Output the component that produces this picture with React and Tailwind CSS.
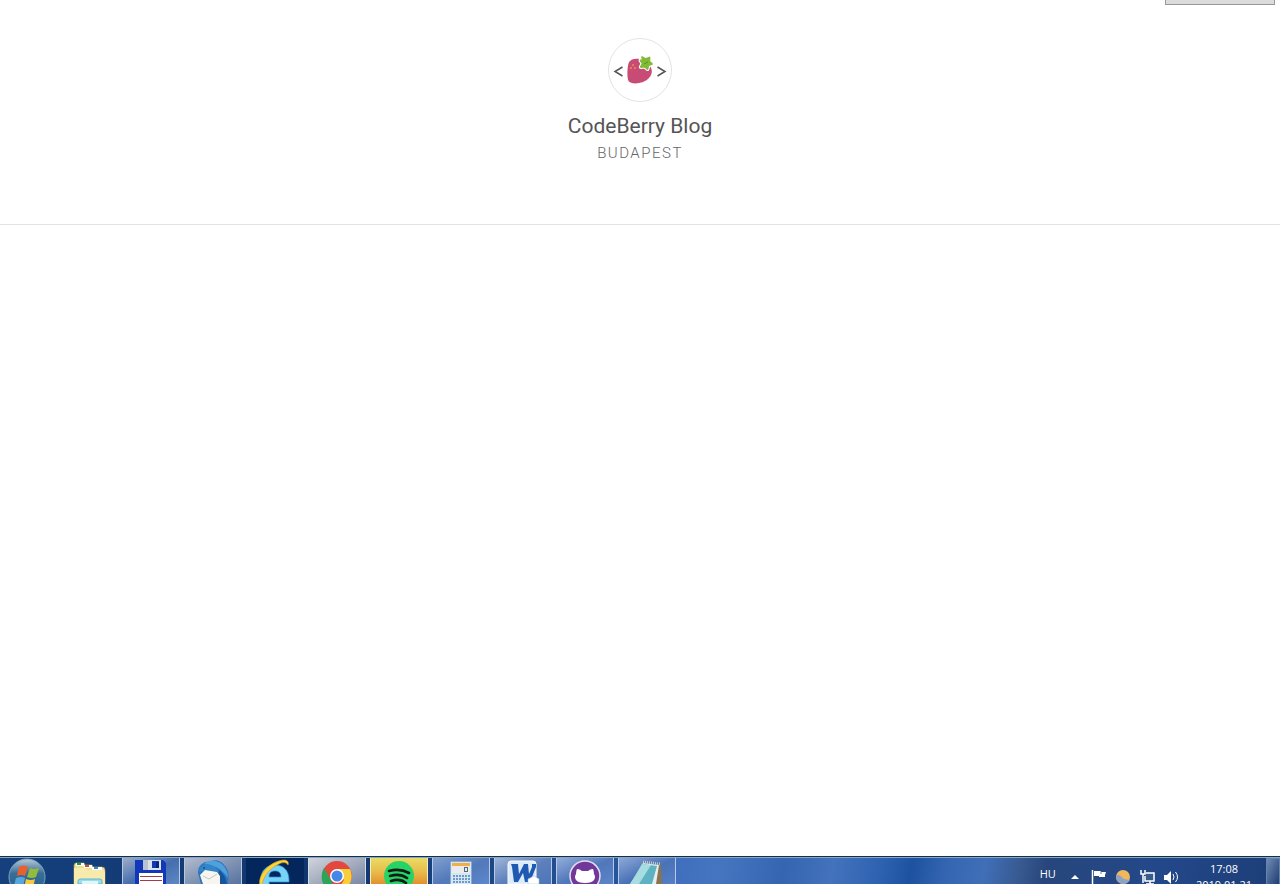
import React from "react";

const tasks = [
  { name: "Explorer", style: "border-transparent", icon: <Folder /> },
  { name: "Total Commander", style: "border-[#b9c8df] bg-linear-to-br from-[#9eacc9] via-[#466eae] to-[#5f8ac5]", icon: <Floppy /> },
  { name: "Thunderbird", style: "border-[#b9c8df] bg-linear-to-br from-[#b2bccd] via-[#8193b4] to-[#53709f]", icon: <Mail /> },
  { name: "Internet Explorer", style: "border-transparent bg-[#03265c]", icon: <Explorer /> },
  { name: "Chrome", style: "border-[#d5dce7] bg-linear-to-br from-[#d0d4dc] via-[#a4acbd] to-[#7484a5]", icon: <Chrome /> },
  { name: "Spotify", style: "border-[#f1ecc2] bg-linear-to-b from-[#e8dc65] via-[#e8bb49] to-[#e08a2c]", icon: <Spotify /> },
  { name: "Calculator", style: "border-[#b7c9e8] bg-linear-to-br from-[#819fcf] via-[#5279b9] to-[#5e89cf]", icon: <Calculator /> },
  { name: "Word", style: "border-[#b7c9e8] bg-linear-to-br from-[#a0b4d8] via-[#5d80bc] to-[#4a74b8]", icon: <Word /> },
  { name: "GitHub", style: "border-[#b7c9e8] bg-linear-to-br from-[#93acd9] via-[#5077ba] to-[#5c86cc]", icon: <GitHub /> },
  { name: "Notepad", style: "border-[#b7c9e8] bg-linear-to-br from-[#8da8d8] via-[#4a72b6] to-[#5680c8]", icon: <Notepad /> },
];

function Icon({ children }) {
  return (
    <svg viewBox="0 0 58 28" className="block h-7 w-[58px] shrink-0" aria-hidden="true">
      {children}
    </svg>
  );
}

function Folder() {
  return (
    <Icon>
      <path d="M14 28V10q0-3 2-3h8l1 2h7l1 2h9q3 0 3 3v14z" fill="#efdf8f" stroke="#a99a50" strokeWidth=".7" />
      <path d="M16 7h8v3h-8zM24 9h8v3h-8zM32 11h10v3H32z" fill="#fff" />
      <path d="M17 7h4v2h-4z" fill="#1d9b38" />
      <path d="M25 9h4v2h-4z" fill="#c5502e" />
      <path d="M34 11h4v2h-4z" fill="#3487c7" />
      <path d="M14 12h11l2 2h17l1 2v12H14z" fill="#f6ebad" />
      <path d="M18 28v-3q0-2 3-2h19q2 0 2 2v3z" fill="#9bdcec" stroke="#5eb4cf" />
      <path d="M22 25h16v3H22z" fill="#e0f7fa" />
    </Icon>
  );
}

function Floppy() {
  return (
    <Icon>
      <path d="M13 4h28l3 3v21H13z" fill="#1238ba" />
      <path d="M21 4h18v10H21z" fill="#dbe1e8" />
      <path d="M21 4h5v10h-5z" fill="#b9c2ce" />
      <path d="M30 5h7v7h-7z" fill="#1238ba" />
      <path d="M34 6h3v6h-3z" fill="#0a237e" />
      <path d="M17 17h24v11H17z" fill="#fff" />
      <path d="M18 20.500h22M18 24.500h22" stroke="#a33b4d" />
    </Icon>
  );
}

function Mail() {
  return (
    <Icon>
      <path d="M14 17C14 9 20 5 26 6c5-4 12-1 15 4 4 4 4 11 3 18H17z" fill="#2d76bd" />
      <path d="M20 8q8-7 18 0 6 6 6 14-7-10-15-12z" fill="#4fa1dd" />
      <path d="M35 14q6 4 8 14h-9z" fill="#195399" />
      <path d="M15 16q0-6 7-8 8 0 13 8l-12-2z" fill="#3186c9" />
      <path d="M16 19l5-5 12 2 3 4v8H19z" fill="#f7f5ef" />
      <path d="M19 20l6 3 8-5" fill="none" stroke="#b8b9b9" strokeWidth=".8" />
      <circle cx="20" cy="12" r=".8" fill="#0d2c5b" />
    </Icon>
  );
}

function Explorer() {
  return (
    <Icon>
      <path fillRule="evenodd" d="M15 23c0-9 6-14 14-14 9 0 14 6 14 15v2H23c0 4 4 6 8 5v5H22c-5-3-7-7-7-13m8-2h12c0-4-2-6-6-6s-6 2-6 6" fill="#79d3f6" stroke="#2794d7" strokeWidth=".7" />
      <path d="M14 30C11 19 24 5 38 4c4 0 5 3 4 5-2-3-5-3-9-1C24 12 17 20 16 30z" fill="#fbd33a" stroke="#d79a19" strokeWidth=".6" />
    </Icon>
  );
}

function Chrome() {
  return (
    <Icon>
      <circle cx="29" cy="20" r="15" fill="#e2483d" />
      <path d="M16 12l7 12 6 11C16 36 10 23 16 12" fill="#2ca45a" />
      <path d="M29 13h13c5 11-2 22-13 22l7-11z" fill="#f9ce3b" />
      <circle cx="29" cy="20" r="7" fill="#fff" />
      <circle cx="29" cy="20" r="5.5" fill="#4387e9" />
    </Icon>
  );
}

function Spotify() {
  return (
    <Icon>
      <circle cx="29" cy="20" r="15" fill="#25d366" />
      <path d="M19 15q11-3 20 2M20 20q10-3 17 2M21 25q9-3 15 2" fill="none" stroke="#111c17" strokeWidth="2.6" strokeLinecap="round" />
    </Icon>
  );
}

function Calculator() {
  return (
    <Icon>
      <rect x="18.5" y="5.5" width="21" height="27" rx="1" fill="#d5e6f4" stroke="#86aad1" />
      <path d="M20 7h18v3H20z" fill="#f1ad47" />
      <path d="M20 10h18v7H20z" fill="#e9ecea" />
      <rect x="32.5" y="11.5" width="3" height="4" fill="none" stroke="#51687d" />
      <path d="M21 20h17M21 23h17M21 26h17" stroke="#6f99c6" strokeWidth="2" strokeDasharray="2 1" />
    </Icon>
  );
}

function Word() {
  return (
    <Icon>
      <path d="M14 28V8q0-3 3-3h22q3 0 3 3v20z" fill="#dceafa" stroke="#f7fbff" />
      <path d="M17 8h7l1 10 5-10h4l1 10 3-7V8h4v3l-6 15h-5l-2-9-5 9h-4l-2-15z" fill="#1e5ab2" />
      <path d="M34 23l6-3 5 3v5H34z" fill="#fff" stroke="#a7bdda" strokeWidth=".5" />
    </Icon>
  );
}

function GitHub() {
  return (
    <Icon>
      <circle cx="29" cy="20" r="15" fill="#71389a" stroke="#e6def0" strokeWidth="1.5" />
      <path d="M21 13q3 0 5 2h6q2-2 5-2 1 2 1 5 2 3 0 6-2 3-9 3t-9-3q-2-3 0-6 0-3 1-5" fill="#fff" />
    </Icon>
  );
}

function Notepad() {
  return (
    <Icon>
      <path d="M40 8l3 2 1 18h-9z" fill="#8b7250" />
      <path d="M25 7l16 2-3 19H12z" fill="#e5f1ef" />
      <path d="M24 8l15 2-5 18H13z" fill="#5fb2c2" />
      <path d="M24 8l9 1-12 19h-8z" fill="#a7dce1" />
      <path d="M25 6l17 2" stroke="#c6cac3" strokeWidth="3" strokeDasharray="1 1" />
    </Icon>
  );
}

function StartOrb() {
  return (
    <svg viewBox="0 0 60 28" className="block h-7 w-[60px]" aria-hidden="true">
      <defs>
        <linearGradient id="orb" x1="0" y1="0" x2="0" y2="1">
          <stop stopColor="#b8c8d6" />
          <stop offset=".4" stopColor="#396d96" />
          <stop offset="1" stopColor="#1d5f93" />
        </linearGradient>
      </defs>
      <circle cx="27" cy="21" r="18" fill="url(#orb)" stroke="#78a4bf" />
      <path d="M19 11q5-3 9 0l-3 9q-4-2-8 0z" fill="#e8602d" />
      <path d="M30 12q4 2 9 0l-3 9q-4 2-9 0z" fill="#92bd3a" />
      <path d="M16 22q5-2 9 0l-2 9-9-1z" fill="#58a5e0" />
      <path d="M26 23q5 2 9 0l-2 9h-9z" fill="#f8c93b" />
    </svg>
  );
}

function Berry() {
  return (
    <svg viewBox="0 0 64 64" className="block size-16" role="img" aria-label="CodeBerry">
      <circle cx="32" cy="32" r="31.5" fill="#fff" stroke="#e3e3e3" />
      <path d="M14.5 29l-7.500 4.500 7.500 4.500M49.500 29l7.500 4.500-7.500 4.500" fill="none" stroke="#555" strokeWidth="1.500" />
      <path d="M21 24c2-3 6-4 11-3l10 7c2 3 2.500 6 1 9-2 4-6 7-12 8-5 1-9 0-10.500-2-1.500-3-1.500-14 .5-19" fill="#c84b75" />
      <path d="M34 19l3.500 2 4-1.500-.2 4 2.700 2.500-3.700 1.500-.8 3.500-2.700-2.500-4 .5 1.700-3.500-2-3 2.500-.2z" fill="#fff" stroke="#fff" strokeWidth="4" strokeLinejoin="round" />
      <path d="M34 19l3.500 2 4-1.500-.2 4 2.700 2.500-3.700 1.500-.8 3.500-2.700-2.500-4 .5 1.700-3.500-2-3 2.500-.2z" fill="#83ba35" stroke="#83ba35" strokeWidth="1.800" strokeLinejoin="round" />
      <path d="M36 26l4-2" stroke="#47862d" strokeWidth=".8" />
      <g fill="#ee8e48">
        <circle cx="25" cy="27" r="1" />
        <circle cx="23" cy="30" r="1" />
        <circle cx="27" cy="30" r="1" />
      </g>
    </svg>
  );
}

function TrayIcons() {
  return (
    <svg viewBox="0 0 112 28" className="block h-7 w-28" aria-hidden="true">
      <path d="M3 23l4-4 4 4z" fill="#fff" />
      <path d="M24.500 28V14" stroke="#fff" strokeWidth="1.500" />
      <path d="M26 15h7v1h5l-1 3v2h-6v-1h-5z" fill="#fff" />
      <path d="M33 15v3" stroke="#50698d" strokeWidth=".8" />
      <circle cx="55" cy="21" r="7" fill="#f2b65c" />
      <path d="M48 20c4-3 5 1 8 3l6 1c-4 7-14 4-14-4" fill="#8ba4c6" />
      <path d="M78 17h8v8h-9v-5" fill="#385c8a" stroke="#fff" strokeWidth="1.500" />
      <path d="M73 14v4h4v-4M75 18v9M78 28h8M82 25v3" fill="none" stroke="#fff" strokeWidth="1.500" />
      <path d="M96 19h3l4-4v13l-4-4h-3z" fill="#fff" />
      <path d="M105 18q2 3 0 6M107.500 16q4 5 0 10" fill="none" stroke="#fff" />
    </svg>
  );
}

export default function App() {
  return (
    <div className="flex h-screen flex-col overflow-hidden bg-white font-['Roboto',sans-serif]">
      <header className="relative flex flex-col items-center border-b border-[#e3e3e3] pt-[38px] pb-[60px]">
        <div className="absolute top-0 right-[5px] h-[5px] w-[110px] border border-t-0 border-[#979797] bg-[#dcdcdc]" />
        <Berry />
        <h1 className="mt-2 text-[21px] leading-8 text-[#555]">CodeBerry Blog</h1>
        <p className="text-[15px] leading-[22px] font-light tracking-widest text-[#666]">BUDAPEST</p>
      </header>
      <main className="flex-1" />
      <footer className="flex h-7 shrink-0 overflow-hidden border-t border-[#17303f] bg-[#21457f] font-['Open_Sans',sans-serif] text-white">
        <nav className="flex items-start gap-1 border-t border-[#87a4cf] bg-linear-to-r from-[#15407d] via-[#10356d] to-[#2e5ca4]" aria-label="Taskbar">
          <button aria-label="Start" className="-mt-0.5 -mr-1 h-7">
            <StartOrb />
          </button>
          {tasks.map((task) => (
            <button key={task.name} aria-label={task.name} className={`flex h-7 w-[58px] justify-center overflow-hidden border-x ${task.style}`}>
              <span className="-mt-0.5">{task.icon}</span>
            </button>
          ))}
        </nav>
        <div className="flex flex-1 items-start justify-end border-t border-[#87a4cf] bg-[linear-gradient(100deg,#3f6fbd_0%,#4675c0_8%,#3565b0_18%,#4472bd_26%,#2d62b0_34%,#1d52a0_39%,#3566b2_45%,#406fb8_51%,#37598f_57%,#27467c_61%,#23488a_80%,#1c3d76_100%)]">
          <span className="mr-3 pt-2 text-[11px] leading-4">HU</span>
          <span className="-mt-0.5">
            <TrayIcons />
          </span>
          <time className="mr-3.5 ml-4 pt-[3px] text-center text-[11px] leading-4">
            17:08
            <br />
            2019.01.21
          </time>
          <button aria-label="Show desktop" className="h-7 w-3.5 border border-[#6482ad] bg-linear-to-br from-[#6f8bb3] to-[#1e3d70]" />
        </div>
      </footer>
    </div>
  );
}
